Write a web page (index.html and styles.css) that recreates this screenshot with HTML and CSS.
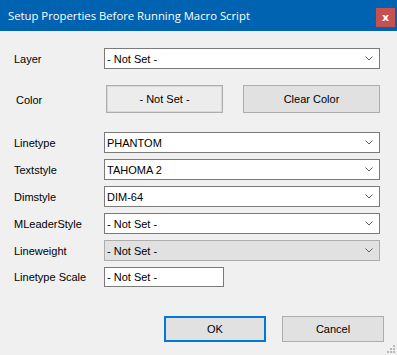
FILE: index.html
```html
<!DOCTYPE html>
<html lang="en">
<head>
  <meta charset="UTF-8">
  <title>Setup Properties Before Running Macro Script</title>
  <link rel="stylesheet" href="styles.css">
</head>
<body>
  <div class="dialog">
    <!-- Title bar -->
    <div class="title-bar">
      <span class="title">Setup Properties Before Running Macro Script</span>
      <button class="close-button">x</button>
    </div>

    <div class="content">
      <!-- Layer -->
      <div class="row row-layer">
        <label>Layer</label>
        <div class="combo">
          <span>- Not Set -</span>
          <svg class="arrow" width="8" height="5" viewBox="0 0 8 5"><path d="M0.5 0.5 L4 4 L7.5 0.5" fill="none" stroke="#606060" stroke-width="1"/></svg>
        </div>
      </div>

      <!-- Color -->
      <div class="row row-color">
        <label class="color-label">Color</label>
        <button class="color-button">- Not Set -</button>
        <button class="clear-button">Clear Color</button>
      </div>

      <!-- Styles -->
      <div class="row row-first">
        <label>Linetype</label>
        <div class="combo">
          <span>PHANTOM</span>
          <svg class="arrow" width="8" height="5" viewBox="0 0 8 5"><path d="M0.5 0.5 L4 4 L7.5 0.5" fill="none" stroke="#606060" stroke-width="1"/></svg>
        </div>
      </div>
      <div class="row">
        <label>Textstyle</label>
        <div class="combo">
          <span>TAHOMA 2</span>
          <svg class="arrow" width="8" height="5" viewBox="0 0 8 5"><path d="M0.5 0.5 L4 4 L7.5 0.5" fill="none" stroke="#606060" stroke-width="1"/></svg>
        </div>
      </div>
      <div class="row">
        <label>Dimstyle</label>
        <div class="combo">
          <span>DIM-64</span>
          <svg class="arrow" width="8" height="5" viewBox="0 0 8 5"><path d="M0.5 0.5 L4 4 L7.5 0.5" fill="none" stroke="#606060" stroke-width="1"/></svg>
        </div>
      </div>
      <div class="row">
        <label>MLeaderStyle</label>
        <div class="combo">
          <span>- Not Set -</span>
          <svg class="arrow" width="8" height="5" viewBox="0 0 8 5"><path d="M0.5 0.5 L4 4 L7.5 0.5" fill="none" stroke="#606060" stroke-width="1"/></svg>
        </div>
      </div>
      <div class="row">
        <label>Lineweight</label>
        <div class="combo disabled">
          <span>- Not Set -</span>
          <svg class="arrow" width="8" height="5" viewBox="0 0 8 5"><path d="M0.5 0.5 L4 4 L7.5 0.5" fill="none" stroke="#606060" stroke-width="1"/></svg>
        </div>
      </div>
      <div class="row row-scale">
        <label>Linetype Scale</label>
        <input type="text" class="text-box" value="- Not Set -">
      </div>

      <!-- Buttons -->
      <div class="actions">
        <button class="ok-button">OK</button>
        <button class="cancel-button">Cancel</button>
      </div>
    </div>

    <svg class="grip" width="8" height="8" viewBox="0 0 8 8">
      <rect x="6" y="0" width="2" height="2" fill="#b8b8b8"/>
      <rect x="3" y="3" width="2" height="2" fill="#b8b8b8"/>
      <rect x="6" y="3" width="2" height="2" fill="#b8b8b8"/>
      <rect x="0" y="6" width="2" height="2" fill="#b8b8b8"/>
      <rect x="3" y="6" width="2" height="2" fill="#b8b8b8"/>
      <rect x="6" y="6" width="2" height="2" fill="#b8b8b8"/>
    </svg>
  </div>
</body>
</html>
```

FILE: styles.css
```css
/* General Reset */
body {
  margin: 0;
  padding: 0;
  background: #f0f0f0;
  font-family: 'Liberation Sans', Arial, sans-serif;
  font-size: 11px;
  color: #000;
}

.dialog {
  position: relative;
  width: 397px;
  height: 355px;
  background: #f0f0f0;
}

/* Title Bar */
.title-bar {
  height: 31px;
  background: #0063b1;
  display: flex;
  align-items: center;
  justify-content: space-between;
  padding: 0 2px 0 8px;
  box-sizing: border-box;
}

.title {
  font-family: 'Open Sans', sans-serif;
  font-size: 11.3px;
  color: #ffffff;
  margin-top: -1px;
}

.close-button {
  width: 19px;
  height: 19px;
  margin-top: 4px;
  background: #c75050;
  color: #ffffff;
  border: none;
  padding: 0;
  font-family: 'DejaVu Sans', sans-serif;
  font-size: 11px;
  font-weight: bold;
  line-height: 17px;
}

/* Form Rows */
.content {
  padding: 0 17px 0 14px;
}

.row {
  display: flex;
  align-items: center;
  height: 21px;
  margin-top: 6px;
}

.row label {
  width: 90px;
  flex: none;
}

.row-layer {
  margin-top: 17px;
}

.row-color {
  height: 28px;
  margin-top: 16px;
}

.row-color .color-label {
  width: 89px;
  padding-left: 2px;
  margin-top: 2px;
}

.row-first {
  margin-top: 19px;
}

.row-scale {
  height: 20px;
}

/* Combo Boxes */
.combo {
  width: 276px;
  height: 21px;
  box-sizing: border-box;
  border: 1px solid #7a7a7a;
  background: #ffffff;
  display: flex;
  align-items: center;
  justify-content: space-between;
  padding: 0 6px 0 2px;
}

.combo.disabled {
  background: #e1e1e1;
  border-color: #adadad;
}

.arrow {
  display: block;
}

.text-box {
  width: 120px;
  height: 20px;
  box-sizing: border-box;
  border: 1px solid #7a7a7a;
  background: #ffffff;
  padding: 0 2px;
  font-family: inherit;
  font-size: 11px;
  outline: none;
}

/* Buttons */
button {
  font-family: inherit;
  font-size: 11px;
  color: #000;
}

.color-button {
  width: 117px;
  height: 28px;
  margin-left: 1px;
  border: 1px solid #adadad;
  box-shadow: inset 0 0 0 1px #d9d9d9;
  background: #ececec;
}

.clear-button {
  width: 137px;
  height: 28px;
  margin-left: 20px;
  border: 1px solid #adadad;
  background: #e1e1e1;
}

.actions {
  display: flex;
  justify-content: flex-end;
  gap: 16px;
  margin-top: 29px;
  margin-right: -4px;
}

.ok-button,
.cancel-button {
  width: 102px;
  height: 26px;
  background: #e1e1e1;
  border: 1px solid #adadad;
}

.ok-button {
  border: 2px solid #0078d7;
}

.grip {
  position: absolute;
  right: 2px;
  bottom: 2px;
}
```
